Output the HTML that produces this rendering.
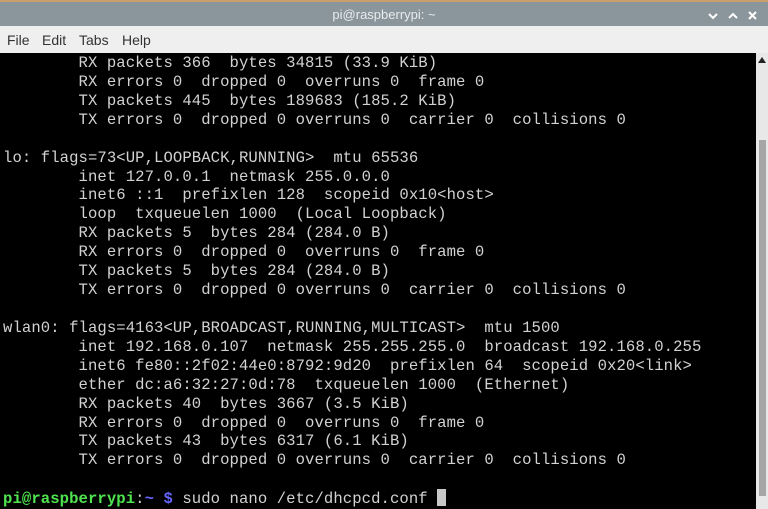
<!DOCTYPE html>
<html><head><style>
*{margin:0;padding:0;box-sizing:border-box}
body{width:768px;height:509px;overflow:hidden;background:#000;font-family:"Liberation Sans",sans-serif;position:relative}
.title{position:absolute;left:0;top:0;width:768px;height:26px;background:#8a959c;border-top:2px solid #c8a070}
.title .t{position:absolute;left:0;width:768px;top:5px;text-align:center;color:#e8ecee;font-size:13px}
.menu{position:absolute;left:0;top:26px;width:768px;height:27px;background:#efefef}
.menu span{position:absolute;top:6px;font-size:14px;color:#333}
.term{position:absolute;left:0;top:53px;width:756px;height:456px;background:#000}
pre{position:absolute;left:3px;top:1px;font-family:"Liberation Mono",monospace;font-size:15.6px;letter-spacing:0.08px;line-height:18.92px;color:#d2d2d2}
.g{color:#4fe34f;font-weight:bold}.b{color:#6464ff;font-weight:bold}
.cur{display:inline-block;width:9px;height:17px;background:#c8c8c8;vertical-align:-3px}
.sb{position:absolute;left:756px;top:53px;width:12px;height:456px;background:#e8e8e8}
.thumb{position:absolute;left:759px;top:140px;width:7px;height:356px;background:#a6a6a6}
</style></head><body>
<div class="title"><div class="t">pi@raspberrypi: ~</div>
<svg style="position:absolute;left:706px;top:7px" width="60" height="14" viewBox="0 0 60 14" fill="none" stroke="#fff" stroke-width="2">
<path d="M3 5l4 4 4-4"/><path d="M23 9l4-4 4 4"/><path d="M43 3l7 7M50 3l-7 7"/></svg></div>
<div class="menu"><span style="left:7px">File</span><span style="left:42px">Edit</span><span style="left:79px">Tabs</span><span style="left:122px">Help</span></div>
<div class="term"><pre>        RX packets 366  bytes 34815 (33.9 KiB)
        RX errors 0  dropped 0  overruns 0  frame 0
        TX packets 445  bytes 189683 (185.2 KiB)
        TX errors 0  dropped 0 overruns 0  carrier 0  collisions 0

lo: flags=73&lt;UP,LOOPBACK,RUNNING&gt;  mtu 65536
        inet 127.0.0.1  netmask 255.0.0.0
        inet6 ::1  prefixlen 128  scopeid 0x10&lt;host&gt;
        loop  txqueuelen 1000  (Local Loopback)
        RX packets 5  bytes 284 (284.0 B)
        RX errors 0  dropped 0  overruns 0  frame 0
        TX packets 5  bytes 284 (284.0 B)
        TX errors 0  dropped 0 overruns 0  carrier 0  collisions 0

wlan0: flags=4163&lt;UP,BROADCAST,RUNNING,MULTICAST&gt;  mtu 1500
        inet 192.168.0.107  netmask 255.255.255.0  broadcast 192.168.0.255
        inet6 fe80::2f02:44e0:8792:9d20  prefixlen 64  scopeid 0x20&lt;link&gt;
        ether dc:a6:32:27:0d:78  txqueuelen 1000  (Ethernet)
        RX packets 40  bytes 3667 (3.5 KiB)
        RX errors 0  dropped 0  overruns 0  frame 0
        TX packets 43  bytes 6317 (6.1 KiB)
        TX errors 0  dropped 0 overruns 0  carrier 0  collisions 0

<span class="g">pi@raspberrypi</span>:<span class="b">~ $</span> sudo nano /etc/dhcpcd.conf <span class="cur"></span></pre></div>
<div class="sb"><svg style="position:absolute;left:2px;top:4px" width="8" height="6"><path d="M0 6L4 0L8 6Z" fill="#222"/></svg></div>
<div class="thumb"></div>
</body></html>
